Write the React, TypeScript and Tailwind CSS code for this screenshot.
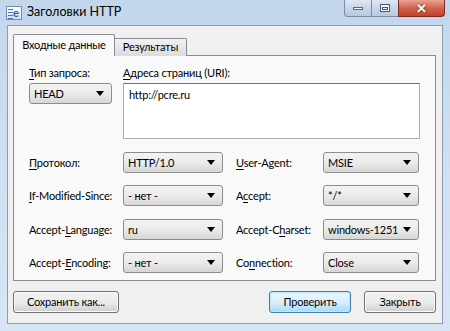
import React from "react";

const font = { fontFamily: 'Lato, "Noto Sans", sans-serif' };

function U({ children }: { children: React.ReactNode }) {
  return <span className="underline underline-offset-[2px]">{children}</span>;
}

function Select({ value, w }: { value: string; w: string }) {
  return (
    <div
      className={`${w} h-[21px] flex items-center justify-between pl-[4px] pr-[7px] rounded-[3px] border border-[#8d8d8d] bg-gradient-to-b from-[#f3f3f3] via-[#ebebeb] to-[#d6d6d6] text-[11px] tracking-[-0.2px] text-black leading-none whitespace-nowrap`}
    >
      <span>{value}</span>
      <svg width="8" height="5" viewBox="0 0 8 5">
        <path d="M0 0 L8 0 L4 5 Z" fill="#000" />
      </svg>
    </div>
  );
}

function Btn({ children, w, primary }: { children: React.ReactNode; w: string; primary?: boolean }) {
  return (
    <div
      className={`${w} h-[22px] flex items-center justify-center rounded-[3px] border text-[11px] tracking-[-0.2px] text-black whitespace-nowrap ${
        primary
          ? "border-[#3c7fb1] bg-gradient-to-b from-[#eaf6fd] via-[#d9f0fc] to-[#a7d9f5] shadow-[inset_0_0_0_1px_#c0e6f8]"
          : "border-[#707070] bg-gradient-to-b from-[#f2f2f2] via-[#ebebeb] to-[#cfcfcf] shadow-[inset_0_0_0_1px_#fcfcfc]"
      }`}
    >
      {children}
    </div>
  );
}

function Label({ children }: { children: React.ReactNode }) {
  return <div className="text-[11px] tracking-[-0.2px] text-black leading-none whitespace-nowrap">{children}</div>;
}

export default function App() {
  return (
    <div
      style={font}
      className="w-[450px] h-[331px] relative flex flex-col bg-gradient-to-b from-[#c3d6ec] via-[#cfe0f2] to-[#d7e6f5] overflow-hidden"
    >
      {/* title bar */}
      <div className="h-[25px] flex items-center pl-[6px] shrink-0">
        <div className="w-[16px] h-[14px] mr-[5px] relative border border-[#6f8db5] bg-gradient-to-b from-[#ffffff] to-[#cfe0f3] flex">
          <div className="w-[6px] flex flex-col gap-[2px] pt-[2px] pl-[1px]">
            <div className="h-[1px] bg-[#4b74b0]" />
            <div className="h-[1px] bg-[#4b74b0]" />
            <div className="h-[1px] bg-[#4b74b0]" />
            <div className="h-[1px] bg-[#4b74b0]" />
          </div>
          <span className="text-[11px] font-bold text-[#2b63b8] leading-none">e</span>
        </div>
        <span className="text-[12.5px] text-black">Заголовки HTTP</span>
      </div>
      {/* caption buttons */}
      <div className="absolute top-0 right-[5px] flex h-[17px]">
        <div className="w-[28px] h-full rounded-bl-[4px] border border-[#7b8ea8] border-t-0 bg-gradient-to-b from-[#dfe8f3] via-[#c8d6e8] to-[#b7c9e0] flex items-center justify-center">
          <div className="w-[10px] h-[3px] bg-[#f4f6fa] border border-[#5a6c88]" />
        </div>
        <div className="w-[26px] h-full border-b border-[#7b8ea8] bg-gradient-to-b from-[#dfe8f3] via-[#c8d6e8] to-[#b7c9e0] flex items-center justify-center">
          <div className="w-[10px] h-[8px] border border-[#4a5a75] bg-[#f4f6fa] flex items-center justify-center">
            <div className="w-[6px] h-[3px] border border-[#4a5a75]" />
          </div>
        </div>
        <div className="w-[47px] h-full rounded-br-[4px] border border-[#7a2a22] border-t-0 bg-gradient-to-b from-[#e8a393] via-[#d0644f] to-[#c2402b] flex items-center justify-center">
          <span className="text-white font-bold text-[13px] leading-none" style={{ textShadow: "0 0 2px #5a0f08" }}>
            ✕
          </span>
        </div>
      </div>

      {/* client */}
      <div className="mx-[7px] mb-[7px] flex-1 bg-[#f0f0f0] border border-[#8a9bb3] flex flex-col px-[5px] pt-[8px]">
        {/* tabs */}
        <div className="flex items-end h-[22px] relative z-10">
          <div className="w-[102px] h-[22px] flex items-center justify-center bg-[#f9f9f9] border border-[#898c95] border-b-0 rounded-t-[2px] text-[11px] tracking-[-0.2px] text-black whitespace-nowrap">
            Входные данные
          </div>
          <div className="w-[72px] h-[18px] flex items-center justify-center bg-gradient-to-b from-[#f2f2f2] to-[#dcdcdc] border border-[#898c95] border-l-0 border-b-0 rounded-tr-[2px] text-[11px] tracking-[-0.2px] text-black whitespace-nowrap">
            Результаты
          </div>
        </div>
        {/* panel */}
        <div className="-mt-[1px] w-[423px] h-[226px] bg-[#f9f9f9] border border-[#898c95] pl-[15px] pt-[11px]">
          <div className="flex">
            <div className="w-[94px] flex flex-col">
              <Label>
                <U>Т</U>ип запроса:
              </Label>
              <div className="mt-[5px]">
                <Select value="HEAD" w="w-[83px]" />
              </div>
            </div>
            <div className="flex flex-col">
              <Label>
                <U>А</U>дреса страниц (URI):
              </Label>
              <div className="mt-[5px] w-[297px] h-[56px] bg-white border border-[#abadb3] border-t-[#707070] px-[5px] pt-[4px] text-[11px] tracking-[-0.2px] text-black leading-[14px]">
                http://pcre.ru
              </div>
            </div>
          </div>
          <div className="mt-[13px] grid grid-cols-[94px_100px_13px_87px_96px] gap-y-[12.25px] items-center">
            <Label>
              <U>П</U>ротокол:
            </Label>
            <Select value="HTTP/1.0" w="w-[100px]" />
            <div />
            <Label>
              <U>U</U>ser-Agent:
            </Label>
            <Select value="MSIE" w="w-[96px]" />

            <Label>
              <U>I</U>f-Modified-Since:
            </Label>
            <Select value="- нет -" w="w-[100px]" />
            <div />
            <Label>
              A<U>c</U>cept:
            </Label>
            <Select value="*/*" w="w-[96px]" />

            <Label>
              Accept-<U>L</U>anguage:
            </Label>
            <Select value="ru" w="w-[100px]" />
            <div />
            <Label>
              Accept-C<U>h</U>arset:
            </Label>
            <Select value="windows-1251" w="w-[96px]" />

            <Label>
              Accept-<U>E</U>ncoding:
            </Label>
            <Select value="- нет -" w="w-[100px]" />
            <div />
            <Label>
              Co<U>n</U>nection:
            </Label>
            <Select value="Close" w="w-[96px]" />
          </div>
        </div>
        {/* buttons */}
        <div className="mt-[10px] flex items-center">
          <Btn w="w-[106px]">Сохранить как...</Btn>
          <div className="flex-1" />
          <Btn w="w-[82px]" primary>
            Проверить
          </Btn>
          <div className="w-[13px]" />
          <Btn w="w-[72px]">Закрыть</Btn>
          <div className="w-[1px]" />
        </div>
      </div>
    </div>
  );
}
